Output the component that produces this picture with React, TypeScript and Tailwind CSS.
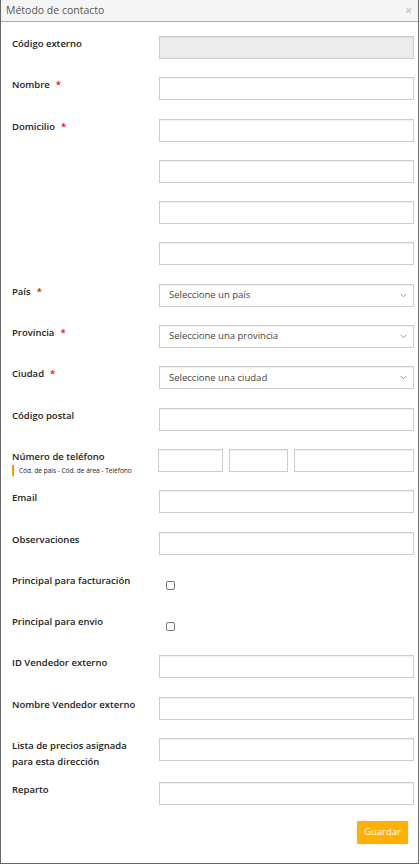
import React from "react";

const inputCls =
  "h-[23px] border border-[#cccccc] shadow-[inset_0_1px_1px_rgba(0,0,0,0.06)]";

function Label({ text, required }: { text: React.ReactNode; required?: boolean }) {
  return (
    <div className="w-[147px] shrink-0 pr-2 text-[9.5px] font-semibold leading-[15px] text-[#222]">
      {text}
      {required && <span className="ml-[6px] text-[#e00]">*</span>}
    </div>
  );
}

function Row({
  label,
  required,
  children,
  tall,
}: {
  label?: React.ReactNode;
  required?: boolean;
  children?: React.ReactNode;
  tall?: boolean;
}) {
  return (
    <div className={`flex items-start ${tall ? "h-[26px]" : "h-[23px]"}`}>
      {label ? <Label text={label} required={required} /> : <div className="w-[147px] shrink-0" />}
      <div className="flex-1">{children}</div>
    </div>
  );
}

function Input({ grey }: { grey?: boolean }) {
  return <div className={`${inputCls} w-full ${grey ? "bg-[#ececec]" : "bg-white"}`} />;
}

function Select({ placeholder }: { placeholder: string }) {
  return (
    <div className={`${inputCls} flex w-full items-center justify-between bg-white pl-[9px] pr-[6px]`}>
      <span className="text-[9.5px] text-[#444]">{placeholder}</span>
      <svg width="7" height="5" viewBox="0 0 7 5" className="text-[#888]">
        <path d="M0.8 1 L3.5 3.8 L6.2 1" fill="none" stroke="currentColor" strokeWidth="0.9" />
      </svg>
    </div>
  );
}

function Check() {
  return (
    <div className="h-[23px] pl-[7px] pt-[8px]">
      <div className="h-[9px] w-[9px] rounded-[2px] border border-[#777] bg-white" />
    </div>
  );
}

export default function App() {
  return (
    <div
      className="h-[864px] w-[420px] overflow-hidden bg-white"
      style={{ fontFamily: '"Open Sans", "Liberation Sans", sans-serif' }}
    >
      <div className="flex h-[864px] w-[419px] flex-col border-x border-b border-[#666] bg-white">
        <div className="flex h-[22px] shrink-0 items-center justify-between border-b border-[#f0a51c] bg-[#f5f5f5] pl-[5px] pr-[6px]">
          <span className="text-[10.5px] text-[#555]">Método de contacto</span>
          <span className="text-[12px] font-bold leading-none text-[#c8c8d0]">×</span>
        </div>

        <div className="flex flex-col gap-[18.3px] pl-[11px] pr-[4px] pt-[14px]">
          <Row label="Código externo">
            <Input grey />
          </Row>
          <Row label="Nombre" required>
            <Input />
          </Row>
          <Row label="Domicilio" required>
            <Input />
          </Row>
          <Row>
            <Input />
          </Row>
          <Row>
            <Input />
          </Row>
          <Row>
            <Input />
          </Row>
          <Row label="País" required>
            <Select placeholder="Seleccione un país" />
          </Row>
          <Row label="Provincia" required>
            <Select placeholder="Seleccione una provincia" />
          </Row>
          <Row label="Ciudad" required>
            <Select placeholder="Seleccione una ciudad" />
          </Row>
          <Row label="Código postal">
            <Input />
          </Row>
          <div className="flex h-[23px] items-start">
            <div className="w-[146px] shrink-0">
              <div className="text-[9.5px] font-semibold leading-[15px] text-[#222]">
                Número de teléfono
              </div>
              <div className="mt-[1px] flex items-center">
                <div className="h-[11px] w-[2px] bg-[#f29a00]" />
                <span className="ml-[5px] text-[6.5px] leading-[11px] text-[#222]">
                  Cód. de país - Cód. de área - Teléfono
                </span>
              </div>
            </div>
            <div className="flex flex-1 gap-[6px]">
              <div className={`${inputCls} w-[65px] shrink-0 bg-white`} />
              <div className={`${inputCls} w-[59px] shrink-0 bg-white`} />
              <div className={`${inputCls} flex-1 bg-white`} />
            </div>
          </div>
          <Row label="Email">
            <Input />
          </Row>
          <Row label="Observaciones">
            <Input />
          </Row>
          <Row label="Principal para facturación">
            <Check />
          </Row>
          <Row label="Principal para envio">
            <Check />
          </Row>
          <Row label="ID Vendedor externo">
            <Input />
          </Row>
          <Row label="Nombre Vendedor externo">
            <Input />
          </Row>
          <Row
            tall
            label={
              <span className="block leading-[16px]">
                Lista de precios asignada
                <br />
                para esta dirección
              </span>
            }
          >
            <Input />
          </Row>
          <Row label="Reparto">
            <Input />
          </Row>
          <div className="-mt-[3px] flex justify-end pr-[6px]">
            <button className="h-[23px] w-[51px] bg-[#ffb000] text-[9.5px] text-white">Guardar</button>
          </div>
        </div>
      </div>
    </div>
  );
}
